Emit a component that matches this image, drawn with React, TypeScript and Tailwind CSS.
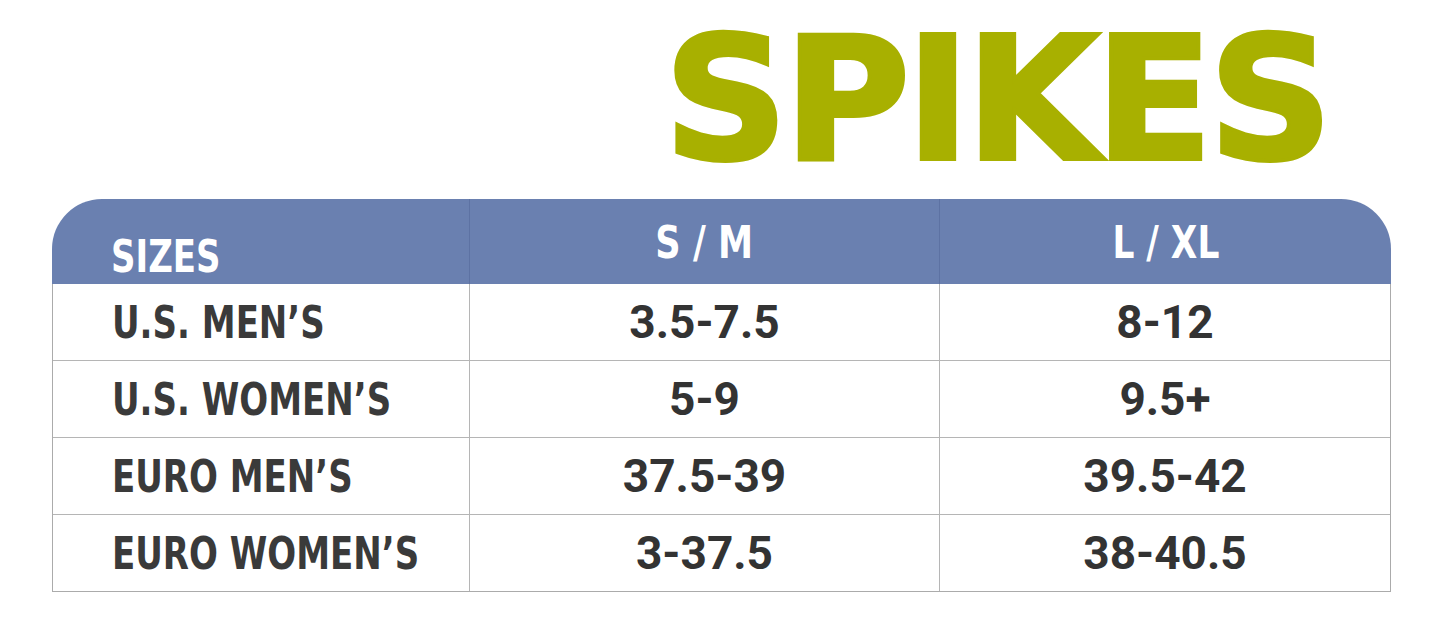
import React from "react";

const rows = [
  ["U.S. MEN\u2019S", "3.5-7.5", "8-12"],
  ["U.S. WOMEN\u2019S", "5-9", "9.5+"],
  ["EURO MEN\u2019S", "37.5-39", "39.5-42"],
  ["EURO WOMEN\u2019S", "3-37.5", "38-40.5"],
];

const narrow: React.CSSProperties = {
  fontFamily: '"DejaVu Sans Condensed", "DejaVu Sans", sans-serif',
  fontStretch: "condensed",
};
const num = { fontFamily: 'Roboto, "Liberation Sans", sans-serif' };

export default function App() {
  return (
    <div className="w-[1445px] h-[625px] bg-white overflow-hidden">
      <div className="h-[199px] pl-[664px]">
        <div
          className="text-[172px] leading-[1.16] font-bold text-[#a8b000] tracking-[-4px] whitespace-nowrap [-webkit-text-stroke:4px_#a8b000]"
          style={{ fontFamily: '"DejaVu Sans", sans-serif' }}
        >
          SPIKES
        </div>
      </div>
      <div className="ml-[52px] w-[1339px]">
        <div className="h-[85px] rounded-t-[50px] bg-[#6a80b0] grid grid-cols-[417px_470px_1fr] text-white" style={narrow}>
          <div className="flex items-end pl-[59px] pb-[5px] text-[45px] leading-none font-bold whitespace-nowrap">
            <span className="inline-block origin-left scale-x-[0.84]">SIZES</span>
          </div>
          <div className="flex items-end justify-center pb-[19px] text-[45px] leading-none font-bold whitespace-nowrap border-l border-[#5d72a3]">
            <span className="inline-block scale-x-[0.87]">S / M</span>
          </div>
          <div className="flex items-end justify-center pb-[19px] text-[45px] leading-none font-bold whitespace-nowrap border-l border-[#5d72a3]">
            <span className="inline-block scale-x-[0.85]">L / XL</span>
          </div>
        </div>
        <div className="border-x border-b border-[#ababab]">
          {rows.map((r, i) => (
            <div
              key={i}
              className={`grid grid-cols-[416px_470px_1fr] ${i < rows.length - 1 ? "h-[77px] border-b border-[#b5b5b5]" : "h-[76px]"}`}
            >
              <div className="flex items-center pl-[59px] text-[45px] leading-none font-bold whitespace-nowrap text-[#3a3a3a]" style={narrow}>
                <span className="inline-block origin-left scale-x-[0.84]">{r[0]}</span>
              </div>
              <div className="flex items-center justify-center border-l border-[#b5b5b5] text-[46px] leading-none font-bold whitespace-nowrap text-[#333333]" style={num}>
                {r[1]}
              </div>
              <div className="flex items-center justify-center border-l border-[#b5b5b5] text-[46px] leading-none font-bold whitespace-nowrap text-[#333333]" style={num}>
                {r[2]}
              </div>
            </div>
          ))}
        </div>
      </div>
    </div>
  );
}
